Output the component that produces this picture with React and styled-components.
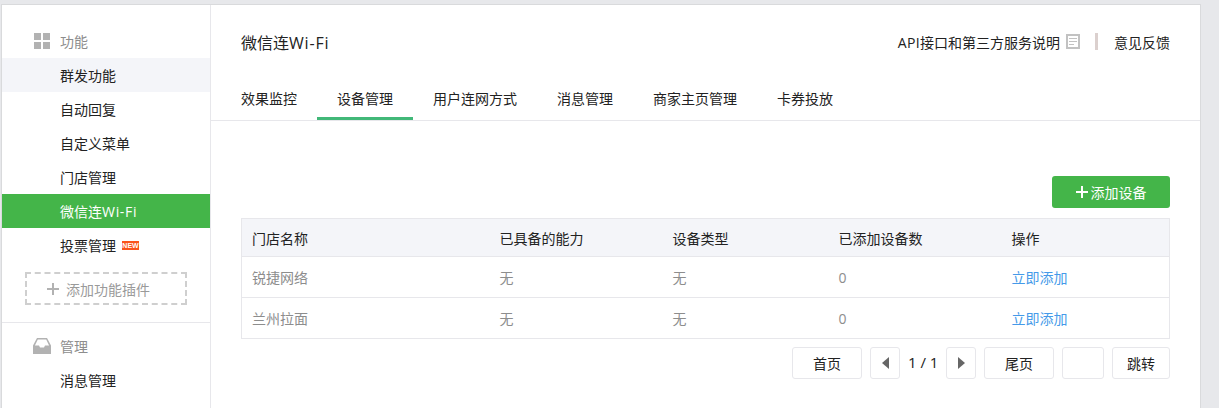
import React from 'react'
import styled, { createGlobalStyle } from 'styled-components'

const GlobalStyle = createGlobalStyle`
  html, body {
    margin: 0;
    height: 408px;
    overflow: hidden;
    background: #e7e8eb;
  }
  body {
    font-family: "Open Sans", "Noto Sans CJK SC", sans-serif;
    font-size: 14px;
    color: #222;
  }
`

const WIFI = '微信连Wi-Fi'
const menuGroups = [
  { title: '功能', icon: 'grid', items: ['群发功能', '自动回复', '自定义菜单', '门店管理', WIFI, '投票管理'] },
  { title: '管理', icon: 'inbox', items: ['消息管理'] },
]
const tabs = ['效果监控', '设备管理', '用户连网方式', '消息管理', '商家主页管理', '卡券投放']
const columns = ['门店名称', '已具备的能力', '设备类型', '已添加设备数', '操作']
const rows = [
  ['锐捷网络', '无', '无', '0'],
  ['兰州拉面', '无', '无', '0'],
]

function GridIcon() {
  return (
    <svg width="16" height="16" viewBox="0 0 16 16">
      <path fill="#b2b2b2" d="M0 0h7v7H0zM9 0h7v7H9zM0 9h7v7H0zM9 9h7v7H9z" />
    </svg>
  )
}

function InboxIcon() {
  return (
    <svg width="18" height="16" viewBox="0 0 18 16">
      <path fill="#b2b2b2" fillRule="evenodd" d="M4 0h10l4 7.500V16H0V7.500zM4.800 1.500 1.900 7.500H6l1 2h4l1-2h4.100l-2.900-6z" />
    </svg>
  )
}

function DocIcon() {
  return (
    <svg width="14" height="15" viewBox="0 0 14 15">
      <path fill="none" stroke="#c2c2c2" strokeWidth="2" d="M1 1h12v13H1z" />
      <path fill="none" stroke="#c2c2c2" d="M3 4.500h8M3 7.500h8M3 10.500h5" />
    </svg>
  )
}

function Triangle({ left }) {
  return (
    <svg width="7" height="12" viewBox="0 0 7 12">
      <path fill="#666" d={left ? 'M7 0v12L0 6z' : 'M0 0v12l7-6z'} />
    </svg>
  )
}

function PlusIcon({ color }) {
  return (
    <svg width="12" height="12" viewBox="0 0 12 12">
      <path fill={color} d="M5 0h2v5h5v2H7v5H5V7H0V5h5z" />
    </svg>
  )
}

function WifiLabel() {
  return <>微信连<Latin>Wi-Fi</Latin></>
}

export default function App() {
  return (
    <>
      <GlobalStyle />
      <Card>
        <Sidebar>
          {menuGroups.map((group, i) => (
            <MenuGroup key={group.title} $first={i === 0}>
              <GroupTitle>
                <GroupIcon>{group.icon === 'grid' ? <GridIcon /> : <InboxIcon />}</GroupIcon>
                {group.title}
              </GroupTitle>
              {group.items.map((item) => (
                <MenuItem key={item} $hover={item === '群发功能'} $active={item === WIFI}>
                  <span>{item === WIFI ? <WifiLabel /> : item}</span>
                  {item === '投票管理' && <NewBadge>NEW</NewBadge>}
                </MenuItem>
              ))}
              {i === 0 && (
                <AddPlugin>
                  <PlusIcon color="#b2b2b2" />
                  添加功能插件
                </AddPlugin>
              )}
            </MenuGroup>
          ))}
        </Sidebar>
        <Main>
          <TitleBar>
            <PageTitle><WifiLabel /></PageTitle>
            <TitleLinks>
              <DocLink>
                <span><ApiText>API</ApiText>接口和第三方服务说明</span>
                <DocIcon />
              </DocLink>
              <Separator />
              <span>意见反馈</span>
            </TitleLinks>
          </TitleBar>
          <TabBar>
            {tabs.map((tab) => (
              <Tab key={tab} $active={tab === '设备管理'}>{tab}</Tab>
            ))}
          </TabBar>
          <Content>
            <ToolRow>
              <AddButton>
                <PlusIcon color="#fff" />
                添加设备
              </AddButton>
            </ToolRow>
            <Table>
              <colgroup>
                <col width="248" />
                <col width="173" />
                <col width="166" />
                <col width="173" />
                <col />
              </colgroup>
              <thead>
                <tr>
                  {columns.map((col) => <HeadCell key={col}>{col}</HeadCell>)}
                </tr>
              </thead>
              <tbody>
                {rows.map((row) => (
                  <tr key={row[0]}>
                    {row.map((cell, i) => <Cell key={i}>{cell}</Cell>)}
                    <Cell><ActionLink>立即添加</ActionLink></Cell>
                  </tr>
                ))}
              </tbody>
            </Table>
            <Pager>
              <PageButton $width={70}>首页</PageButton>
              <PageButton $width={30}><Triangle left /></PageButton>
              <PageCount>1 / 1</PageCount>
              <PageButton $width={30}><Triangle /></PageButton>
              <PageButton $width={70}>尾页</PageButton>
              <PageInput />
              <PageButton $width={58}>跳转</PageButton>
            </Pager>
          </Content>
        </Main>
      </Card>
    </>
  )
}

const Latin = styled.span`
  letter-spacing: 0.05em;
`
const ApiText = styled.span`
  letter-spacing: 0.35px;
`
const Card = styled.div`
  display: flex;
  box-sizing: border-box;
  width: 1200px;
  height: 404px;
  margin: 4px 0 0 1px;
  overflow: hidden;
  background: #fff;
  border: 1px solid #d9dadc;
  border-bottom: 0;
`
const Sidebar = styled.div`
  flex: none;
  box-sizing: border-box;
  width: 209px;
  border-right: 1px solid #e7e7eb;
`
const MenuGroup = styled.div`
  padding-top: ${(p) => (p.$first ? '19px' : '6px')};
  padding-bottom: 17px;
  border-bottom: ${(p) => (p.$first ? '1px solid #e7e7eb' : '0')};
`
const GroupTitle = styled.div`
  display: flex;
  align-items: center;
  height: 34px;
  padding-left: 30px;
  color: #8d8d8d;
`
const GroupIcon = styled.span`
  display: flex;
  justify-content: center;
  width: 19px;
  margin-right: 9px;
`
const MenuItem = styled.div`
  display: flex;
  align-items: center;
  height: 34px;
  padding-left: 58px;
  color: ${(p) => (p.$active ? '#fff' : '#222')};
  background: ${(p) => (p.$active ? '#44b549' : p.$hover ? '#f4f5f9' : 'transparent')};
`
const NewBadge = styled.span`
  margin-left: 6px;
  width: 17px;
  height: 9px;
  font: bold 7px/9px "Liberation Sans", sans-serif;
  text-align: center;
  color: #fff;
  background: #fa541c;
`
const AddPlugin = styled.div`
  display: flex;
  align-items: center;
  gap: 7px;
  box-sizing: border-box;
  width: 162px;
  height: 33px;
  margin: 10px 0 0 23px;
  padding-left: 20px;
  color: #9a9a9a;
  border: 2px dashed #cfcfcf;
`
const Main = styled.div`
  flex: 1;
  min-width: 0;
`
const TitleBar = styled.div`
  display: flex;
  align-items: center;
  justify-content: space-between;
  box-sizing: border-box;
  height: 75px;
  padding: 0 30px 2px;
`
const PageTitle = styled.div`
  font-size: 16px;
`
const TitleLinks = styled.div`
  display: flex;
  align-items: center;
`
const DocLink = styled.span`
  display: flex;
  align-items: center;
  gap: 6px;
`
const Separator = styled.span`
  width: 3px;
  height: 17px;
  margin: 0 16px 0 15px;
  background: #dbd0ce;
`
const TabBar = styled.div`
  display: flex;
  height: 40px;
  padding-left: 10px;
  border-bottom: 1px solid #e7e7eb;
`
const Tab = styled.div`
  box-sizing: border-box;
  height: 40px;
  padding: 0 20px;
  line-height: 38px;
  border-bottom: 3px solid ${(p) => (p.$active ? '#41b878' : 'transparent')};
`
const Content = styled.div`
  padding: 0 30px;
`
const ToolRow = styled.div`
  display: flex;
  justify-content: flex-end;
  padding: 55px 0 10px;
`
const AddButton = styled.div`
  display: flex;
  align-items: center;
  justify-content: center;
  gap: 3px;
  width: 118px;
  height: 32px;
  color: #fff;
  background: #44b549;
  border-radius: 3px;
`
const Table = styled.table`
  width: 929px;
  table-layout: fixed;
  border-collapse: collapse;
  border: 1px solid #e7e7eb;
`
const HeadCell = styled.th`
  height: 37px;
  padding: 0 10px;
  font-weight: normal;
  text-align: left;
  background: #f4f5f9;
  border-bottom: 1px solid #e7e7eb;
`
const Cell = styled.td`
  height: 40px;
  padding: 0 10px;
  color: #8d8d8d;
  border-bottom: 1px solid #e7e7eb;
`
const ActionLink = styled.span`
  color: #459ae9;
`
const Pager = styled.div`
  display: flex;
  justify-content: flex-end;
  gap: 8px;
  margin-top: 8px;
`
const PageButton = styled.div`
  display: flex;
  align-items: center;
  justify-content: center;
  box-sizing: border-box;
  width: ${(p) => p.$width}px;
  height: 32px;
  background: #fff;
  border: 1px solid #e7e7eb;
  border-radius: 3px;
`
const PageCount = styled.div`
  width: 30px;
  font-size: 15px;
  line-height: 30px;
  text-align: center;
  white-space: nowrap;
`
const PageInput = styled.div`
  box-sizing: border-box;
  width: 42px;
  height: 32px;
  border: 1px solid #e7e7eb;
  border-radius: 3px;
`
